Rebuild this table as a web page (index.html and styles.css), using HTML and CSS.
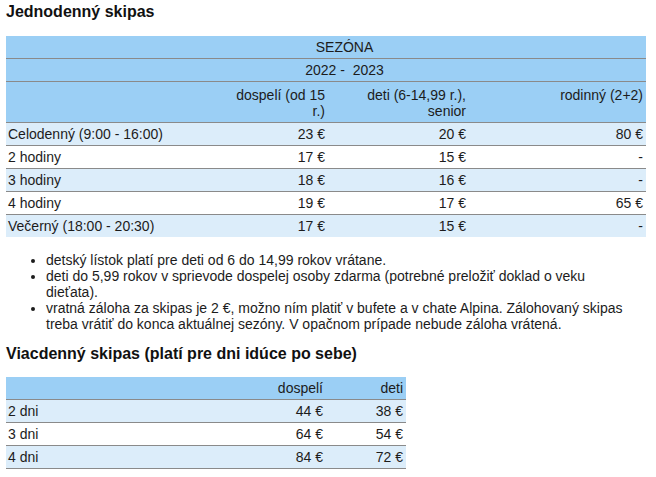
FILE: index.html
```html
<!DOCTYPE html>
<html lang="sk">
<head>
<meta charset="utf-8">
<title>Skipasy</title>
<link rel="stylesheet" href="styles.css">
</head>
<body>
<h2 class="title">Jednodenný skipas</h2>
<table class="price price-day">
  <colgroup>
    <col class="c0"><col class="c1"><col class="c2"><col class="c3">
  </colgroup>
  <thead>
    <tr class="head"><th colspan="4" class="season">SEZÓNA</th></tr>
    <tr class="head"><th colspan="4" class="season">2022 -&nbsp; 2023</th></tr>
    <tr class="head cats"><th></th><th>dospelí (od 15 r.)</th><th>deti (6-14,99 r.), senior</th><th>rodinný (2+2)</th></tr>
  </thead>
  <tbody>
    <tr class="odd"><td>Celodenný (9:00 - 16:00)</td><td>23 €</td><td>20 €</td><td>80 €</td></tr>
    <tr><td>2 hodiny</td><td>17 €</td><td>15 €</td><td>-</td></tr>
    <tr class="odd"><td>3 hodiny</td><td>18 €</td><td>16 €</td><td>-</td></tr>
    <tr><td>4 hodiny</td><td>19 €</td><td>17 €</td><td>65 €</td></tr>
    <tr class="odd last"><td>Večerný (18:00 - 20:30)</td><td>17 €</td><td>15 €</td><td>-</td></tr>
  </tbody>
</table>
<ul class="notes">
  <li>detský lístok platí pre deti od 6 do 14,99 rokov vrátane.</li>
  <li>deti do 5,99 rokov v sprievode dospelej osoby zdarma (potrebné preložiť doklad o veku dieťata).</li>
  <li>vratná záloha za skipas je 2 €, možno ním platiť v bufete a v chate Alpina. Zálohovaný skipas treba vrátiť do konca aktuálnej sezóny. V opačnom prípade nebude záloha vrátená.</li>
</ul>
<h2 class="title title2">Viacdenný skipas (platí pre dni idúce po sebe)</h2>
<table class="price price-multi">
  <colgroup>
    <col class="m0"><col class="m1"><col class="m2">
  </colgroup>
  <thead>
    <tr class="head"><th></th><th>dospelí</th><th>deti</th></tr>
  </thead>
  <tbody>
    <tr class="odd"><td>2 dni</td><td>44 €</td><td>38 €</td></tr>
    <tr><td>3 dni</td><td>64 €</td><td>54 €</td></tr>
    <tr class="odd"><td>4 dni</td><td>84 €</td><td>72 €</td></tr>
  </tbody>
</table>
</body>
</html>
```

FILE: styles.css
```css
html, body {
  background: #ffffff;
}
body {
  margin: 0;
  padding: 2px 10px 0 6px;
  font-family: "Liberation Sans", Arial, sans-serif;
  font-size: 14px;
  line-height: 16px;
  color: #1c1c1c;
}
.title {
  font-size: 16px;
  line-height: 20px;
  font-weight: bold;
  margin: 0 0 14px 0;
  color: #111;
}
.title2 {
  margin-top: 12px;
  margin-bottom: 13px;
}
.price {
  border-collapse: collapse;
  table-layout: fixed;
}
.price-day { width: 640px; }
.price-multi { width: 400px; }
.c0 { width: 226px; }
.c1 { width: 96px; }
.c2 { width: 141px; }
.c3 { width: 177px; }
.m0 { width: 240px; }
.m1 { width: 80px; }
.m2 { width: 80px; }
.price th,
.price td {
  padding: 3px 3px 3px 2px;
  text-align: right;
  font-weight: normal;
  vertical-align: top;
}
.price .cats th {
  padding-top: 5px;
  padding-bottom: 3px;
}
.price td:first-child {
  text-align: left;
}
.price tr {
  border-bottom: 1px solid #8a8a8a;
}
.price tr.last {
  border-bottom: none;
}
.head {
  background: #9bcff5;
}
.season.season {
  text-align: center;
  padding-left: 40px;
}
.odd {
  background: #dcedfa;
}
.notes {
  margin: 15px 16px 0 0;
  padding-left: 40px;
}
```
